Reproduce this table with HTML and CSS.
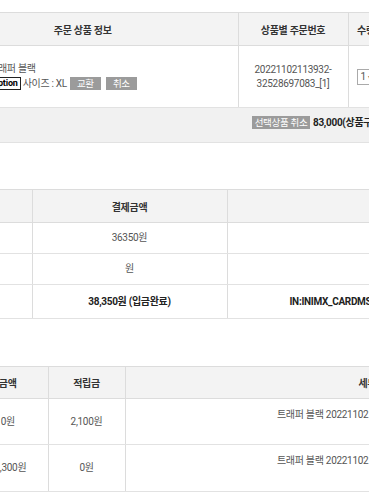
FILE: index.html
```html
<!DOCTYPE html>
<html lang="ko">
<head>
<meta charset="utf-8">
<link rel="stylesheet" href="styles.css">
</head>
<body>
<div class="page">
  <table class="tbl t1">
    <colgroup><col class="c1a"><col class="c1b"><col class="c1c"><col class="c1d"></colgroup>
    <thead>
      <tr class="h33"><th>주문 상품 정보</th><th>상품별 주문번호</th><th>수량</th><th>상품금액</th></tr>
    </thead>
    <tbody>
      <tr class="r62">
        <td class="info">
          <div class="pname">트래퍼 블랙</div>
          <div class="popt"><span class="badge">Option</span><span class="size">사이즈 : XL</span><span class="btn">교환</span><span class="btn">취소</span></div>
        </td>
        <td class="cen">20221102113932-<br>32528697083_[1]</td>
        <td class="qty"><span class="sel">1 <span class="arr">▾</span></span></td>
        <td class="cen">83,000원</td>
      </tr>
      <tr class="foot">
        <td colspan="4" class="footcell"><span class="btn wide">선택상품 취소</span><b class="sum">83,000(상품구매금액) + 0(배송비) = 83,000원</b></td>
      </tr>
    </tbody>
  </table>

  <table class="tbl t2">
    <colgroup><col class="c2a"><col class="c2b"><col class="c2c"></colgroup>
    <thead>
      <tr class="h33"><th>결제수단</th><th>결제금액</th><th>상세정보</th></tr>
    </thead>
    <tbody>
      <tr class="r31"><td class="cen">적립금</td><td class="cen">36350원</td><td class="left"></td></tr>
      <tr class="r31"><td class="cen">예치금</td><td class="cen">원</td><td class="left"></td></tr>
      <tr class="r34"><td class="cen">신용카드</td><td class="cen strong">38,350원 (입금완료)</td><td class="left strong">IN:INIMX_CARDMSrl20221102113932</td></tr>
    </tbody>
  </table>

  <table class="tbl t3">
    <colgroup><col class="c3a"><col class="c3b"><col class="c3c"></colgroup>
    <thead>
      <tr class="h32"><th>금액</th><th>적립금</th><th>세부내역</th></tr>
    </thead>
    <tbody>
      <tr class="r46"><td class="cen">0원</td><td class="cen">2,100원</td><td class="cen two">트래퍼 블랙 20221102113932-32528697083_[1]<br>&nbsp;</td></tr>
      <tr class="r47"><td class="cen">41,300원</td><td class="cen">0원</td><td class="cen two">트래퍼 블랙 20221102113932-32528697083_[1]<br>&nbsp;</td></tr>
    </tbody>
  </table>
</div>
</body>
</html>
```

FILE: styles.css
```css
html, body {
  margin: 0;
  padding: 0;
  background: #fff;
  overflow: hidden;
}
body {
  font-family: Roboto, "Noto Sans CJK KR", sans-serif;
  font-size: 10px;
  letter-spacing: -0.3px;
  color: #555;
  width: 369px;
  height: 500px;
}
.page {
  padding-top: 12px;
  width: 1000px;
}
.tbl {
  border-collapse: collapse;
  table-layout: fixed;
  border-top: 1px solid #dcdcdc;
}
.tbl th {
  background: #f3f3f3;
  color: #333;
  font-weight: bold;
  font-size: 10px;
  text-align: center;
  border-bottom: 1px solid #dcdcdc;
  border-left: 1px solid #dcdcdc;
  padding: 0;
  white-space: nowrap;
  overflow: hidden;
}
.tbl td {
  border-bottom: 1px solid #e2e2e2;
  border-left: 1px solid #dcdcdc;
  padding: 0;
  white-space: nowrap;
  overflow: hidden;
  line-height: 14px;
}
.tbl th:first-child, .tbl td:first-child { border-left: none; }

.t1 { margin-left: -72px; width: 556px; }
.c1a { width: 310px; }
.c1b { width: 110px; }
.c1c { width: 36px; }
.c1d { width: 100px; }
.h33 { height: 33px; }
.h32 { height: 32px; }
.r62 { height: 62px; }
.r31 { height: 31px; }
.r34 { height: 34px; }
.r46 { height: 46px; }
.r47 { height: 47px; }

.cen { text-align: center; }
.left { text-align: left; padding-left: 62px !important; }
.strong { font-weight: bold; color: #222; }

.info { padding-left: 61px !important; line-height: 15px; }
.pname { color: #555; }
.popt { display: flex; align-items: center; height: 15px; }
.badge {
  border: 1px solid #222;
  color: #000;
  font-weight: bold;
  font-size: 9px;
  letter-spacing: -0.2px;
  line-height: 11px;
  padding: 0 2px;
  margin-right: 2px;
}
.size { margin-right: 3px; }
.btn {
  display: inline-block;
  background: #9b9b9b;
  color: #fff;
  font-size: 9.5px;
  line-height: 13px;
  width: 31px;
  text-align: center;
  margin-right: 5px;
}
.btn.wide { width: 58px; margin-right: 3px; }
.qty { padding-left: 8px !important; }
.sel {
  display: inline-block;
  border: 1px solid #aaa;
  width: 28px;
  height: 14px;
  line-height: 14px;
  padding-left: 3px;
  color: #555;
}
.arr { font-size: 8px; color: #777; }

.foot { height: 35px; background: #f1f1f1; }
.footcell { padding-left: 324px !important; padding-bottom: 5px !important; }
.sum { color: #222; }

.t2 { margin-left: -68px; margin-top: 46px; width: 795px; }
.c2a { width: 100px; }
.c2b { width: 195px; }
.c2c { width: 500px; }

.t3 { margin-left: -32px; margin-top: 47px; width: 659px; }
.c3a { width: 80px; }
.c3b { width: 77px; }
.c3c { width: 502px; }
.two { line-height: 14px; }
```
